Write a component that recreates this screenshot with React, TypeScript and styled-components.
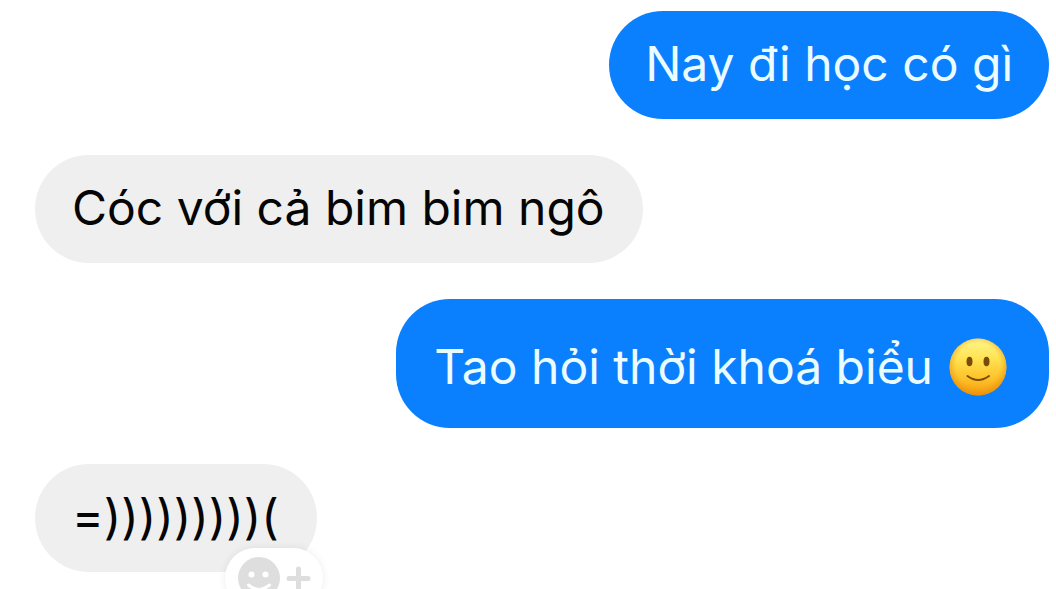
import React from "react";
import styled, { createGlobalStyle } from "styled-components";

const GlobalStyle = createGlobalStyle`
  * { box-sizing: border-box; }
  body {
    margin: 0;
    background: #fff;
    font-family: Inter, "Liberation Sans", sans-serif;
  }
`;

const Conversation = styled.main`
  display: flex;
  flex-direction: column;
  gap: 36px;
  height: 100vh;
  padding: 11px 7px 0 35px;
  overflow: hidden;
`;

const Bubble = styled.div<{ $sent?: boolean; $tall?: boolean }>`
  position: relative;
  display: flex;
  flex-shrink: 0;
  align-items: center;
  gap: 16px;
  align-self: ${(p) => (p.$sent ? "flex-end" : "flex-start")};
  padding: ${(p) => (p.$tall ? "38px 42px 31px 38px" : p.$sent ? "23px 36px 25px" : "23px 38px 25px 37px")};
  border-radius: 54px;
  background: ${(p) => (p.$sent ? "#0a80ff" : "#efefef")};
  color: ${(p) => (p.$sent ? "#ebfcff" : "#050505")};
`;

const Text = styled.p`
  margin: 0;
  font-size: 48px;
  line-height: 60px;
  white-space: nowrap;
`;

const Emoji = styled.svg`
  display: block;
  width: 58px;
  height: 58px;
`;

const ReactionButton = styled.button`
  position: absolute;
  top: 84px;
  left: 190px;
  display: flex;
  align-items: center;
  gap: 5px;
  height: 60px;
  padding: 0 12px;
  border: 0;
  border-radius: 30px;
  background: #fff;
  box-shadow: 0 0 8px rgba(0, 0, 0, 0.08);
`;

const SmileIcon = styled.svg`
  display: block;
  width: 44px;
  height: 44px;
`;

const PlusIcon = styled.svg`
  display: block;
  width: 25px;
  height: 26px;
`;

function SlightSmile() {
  return (
    <Emoji viewBox="0 0 58 58" role="img" aria-label="slightly smiling face">
      <defs>
        <linearGradient id="face" x1="0" y1="0" x2="0" y2="1">
          <stop offset="0" stopColor="#fff58c" />
          <stop offset="0.35" stopColor="#ffe352" />
          <stop offset="0.7" stopColor="#fdc22a" />
          <stop offset="1" stopColor="#f89c10" />
        </linearGradient>
        <radialGradient id="rim" cx="0.5" cy="0.46" r="0.54">
          <stop offset="0.7" stopColor="#f0a010" stopOpacity="0" />
          <stop offset="1" stopColor="#e48a08" stopOpacity="0.7" />
        </radialGradient>
      </defs>
      <circle cx="29" cy="29" r="28.500" fill="url(#face)" />
      <circle cx="29" cy="29" r="28.500" fill="url(#rim)" />
      <ellipse cx="20.500" cy="23.500" rx="3" ry="4.800" fill="#7a4a08" />
      <ellipse cx="37.500" cy="23.500" rx="3" ry="4.800" fill="#7a4a08" />
      <path d="M18.500 38 Q29 46 40 38" fill="none" stroke="#7a4a08" strokeWidth="2" strokeLinecap="round" />
    </Emoji>
  );
}

function AddReaction() {
  return (
    <ReactionButton type="button" aria-label="Add reaction">
      <SmileIcon viewBox="0 0 44 44" aria-hidden="true">
        <circle cx="22" cy="22" r="21" fill="#dedede" />
        <circle cx="14.500" cy="18.500" r="3" fill="#fff" />
        <circle cx="28.500" cy="18.500" r="3" fill="#fff" />
        <path d="M11.500 29 Q22 38 32.500 29" fill="none" stroke="#fff" strokeWidth="3" strokeLinecap="round" />
      </SmileIcon>
      <PlusIcon viewBox="0 0 25 26" aria-hidden="true">
        <path d="M12.500 4V23M3 13.500H22" fill="none" stroke="#dedede" strokeWidth="5" strokeLinecap="round" />
      </PlusIcon>
    </ReactionButton>
  );
}

export default function App() {
  return (
    <>
      <GlobalStyle />
      <Conversation>
        <Bubble $sent>
          <Text>Nay đi học có gì</Text>
        </Bubble>
        <Bubble>
          <Text>Cóc với cả bim bim ngô</Text>
        </Bubble>
        <Bubble $sent $tall>
          <Text>Tao hỏi thời khoá biểu</Text>
          <SlightSmile />
        </Bubble>
        <Bubble>
          <Text>=)))))))))(</Text>
          <AddReaction />
        </Bubble>
      </Conversation>
    </>
  );
}
